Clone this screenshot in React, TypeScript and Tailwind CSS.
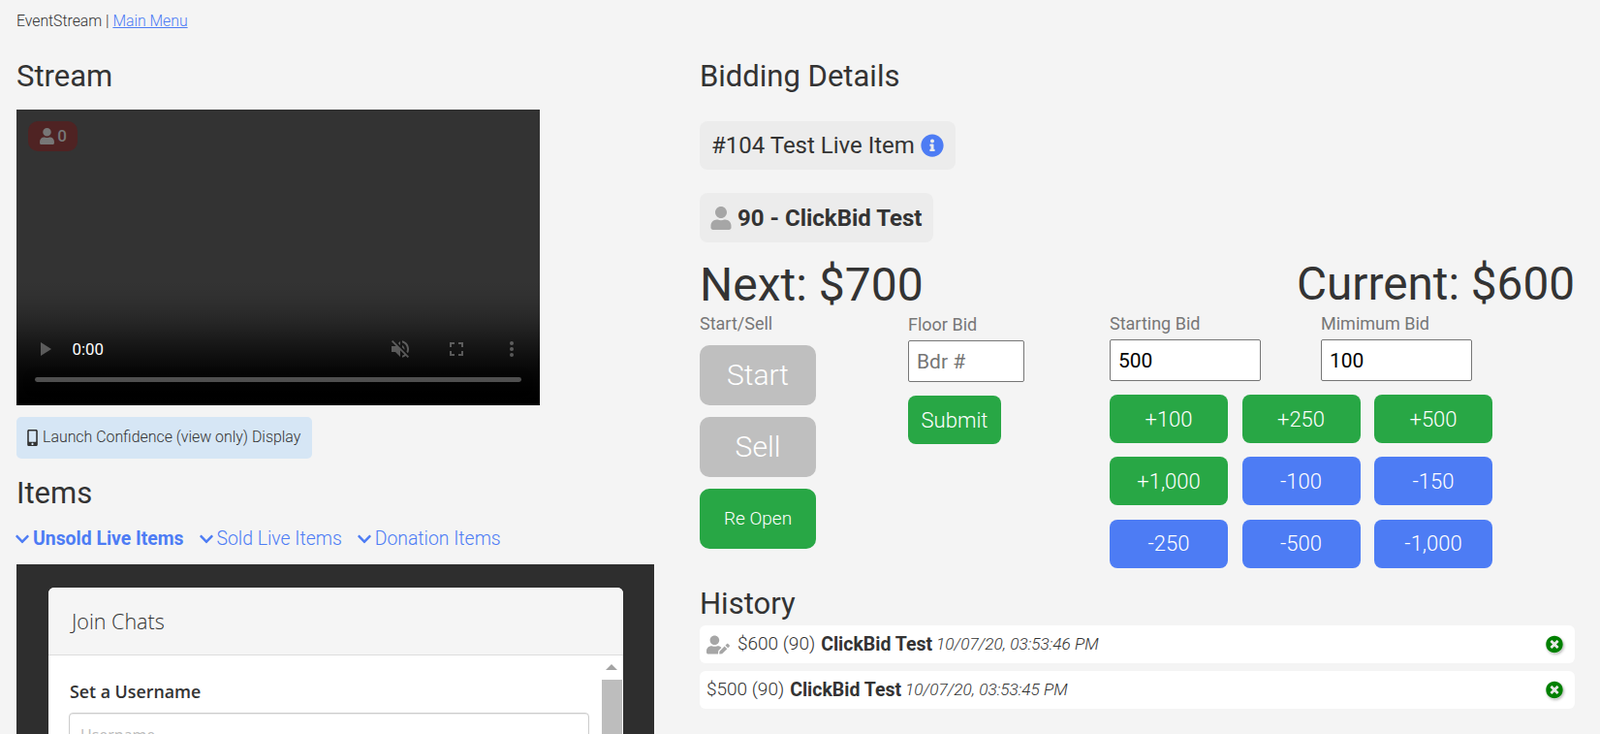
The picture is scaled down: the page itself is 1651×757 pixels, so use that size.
import { FaChevronDown, FaInfoCircle, FaMobileAlt, FaTimesCircle, FaUser, FaUserEdit } from "react-icons/fa";

const bidButtons = [
  { label: "+100", green: true },
  { label: "+250", green: true },
  { label: "+500", green: true },
  { label: "+1,000", green: true },
  { label: "-100", green: false },
  { label: "-150", green: false },
  { label: "-250", green: false },
  { label: "-500", green: false },
  { label: "-1,000", green: false },
];

const history = [
  { amount: "$600 (90)", time: "10/07/20, 03:53:46 PM", edited: true },
  { amount: "$500 (90)", time: "10/07/20, 03:53:45 PM", edited: false },
];

const tabs = [
  { label: "Unsold Live Items", bold: true },
  { label: "Sold Live Items", bold: false },
  { label: "Donation Items", bold: false },
];

function Heading({ children, className = "" }: { children: React.ReactNode; className?: string }) {
  return <h2 className={`text-[31px] leading-[34px] font-normal text-[#333] ${className}`}>{children}</h2>;
}

function JoinChats() {
  return (
    <div className="mt-[15px] h-[175px] overflow-hidden bg-[#2e2e2e] pt-[24px] pr-[32px] pl-[33px] font-['Open_Sans',sans-serif]">
      <div className="h-[200px] rounded-t-[6px] bg-white">
        <div className="flex h-[70px] items-center rounded-t-[6px] border-b border-[#ddd] bg-[#f5f5f5] px-[24px] pt-[1px] text-[21.5px] font-light text-[#333]">
          Join Chats
        </div>
        <div className="flex">
          <div className="flex-1 pt-[26px] pr-[11px] pl-[21px]">
            <div className="pl-[1px] text-[17.8px] leading-[22px] font-semibold text-[#333]">Set a Username</div>
            <div className="mt-[11px] h-[46px] rounded-[4px] border border-[#ccc] px-[11px] pt-[10px] text-[16px] text-[#bbb] shadow-[inset_0_1px_1px_rgba(0,0,0,0.075)]">
              Username
            </div>
          </div>
          <div className="flex w-[24px] flex-col items-center pt-[9px]">
            <div className="h-0 w-0 border-x-[6px] border-b-[6px] border-x-transparent border-b-[#a3a3a3]" />
            <div className="mt-[10px] h-[200px] w-[21px] bg-[#bdbdbd]" />
          </div>
        </div>
      </div>
    </div>
  );
}

export default function App() {
  return (
    <div className="h-[757px] overflow-hidden bg-[#f4f4f4] font-['Roboto',sans-serif] text-[#333]">
      <div className="px-[17px] pt-[13px] text-[15.75px] leading-[18px] font-light">
        EventStream | <a className="text-[#4d7cf4] underline">Main Menu</a>
      </div>

      <div className="flex px-[17px] pt-[31px]">
        <div className="w-[658px]">
          <Heading>Stream</Heading>
          <div className="relative mt-[17px] h-[305px] w-[540px]">
            <video controls muted className="h-[254.2px] w-[450px] bg-[#333] [zoom:1.2]" />
            <div className="absolute top-[12px] left-[12px] flex h-[31px] w-[51px] items-center justify-center gap-[2px] rounded-[10px] bg-[#4f2323] text-[17px] font-medium text-[#777]">
              <FaUser className="size-[17px]" />
              <span>0</span>
            </div>
          </div>
          <button className="mt-[12px] flex h-[43px] w-[305px] items-center gap-[2px] rounded-[5px] bg-[#d6e6f5] pb-[1px] pl-[8px] text-[15.9px] font-light text-[#333]">
            <FaMobileAlt className="size-[17px]" />
            Launch Confidence (view only) Display
          </button>
          <Heading className="mt-[19px]">Items</Heading>
          <div className="mt-[18px] -ml-[2px] flex h-[24px] items-center gap-[15px] text-[19.4px] font-light text-[#4d7cf4]">
            {tabs.map((tab) => (
              <span key={tab.label} className="flex items-center gap-[3px]">
                <FaChevronDown className="size-[16px]" />
                <span className={tab.bold ? "font-bold" : ""}>{tab.label}</span>
              </span>
            ))}
          </div>
          <div className="-mt-[1px]">
            <JoinChats />
          </div>
        </div>

        <div className="ml-[47px] w-[903px]">
          <Heading>Bidding Details</Heading>
          <div className="mt-[29px] flex h-[50px] w-[264px] items-center gap-[6px] rounded-[8px] bg-[#ececec] pl-[12px] text-[24px] font-normal">
            #104 Test Live Item
            <FaInfoCircle className="size-[24px] text-[#4d7cf4]" />
          </div>
          <div className="mt-[24px] flex h-[51px] w-[241px] items-center gap-[5px] rounded-[8px] bg-[#ececec] pl-[10px] text-[24px] font-bold">
            <FaUser className="size-[24px] text-[#a6a6a6]" />
            90 - ClickBid Test
          </div>

          <div className="mt-[16px] flex h-[56px] items-center justify-between text-[48px] font-normal text-[#333]">
            <span>Next: $700</span>
            <span className="text-[47.7px]">Current: $600</span>
          </div>

          <div className="mt-[2px] flex">
            <div className="w-[215px]">
              <div className="h-[32px] text-[18px] leading-[20px] font-normal text-[#777]">Start/Sell</div>
              <div className="flex w-[120px] flex-col gap-[12px]">
                <button className="h-[62px] rounded-[10px] bg-[#bfbfbf] pb-[2px] text-[30px] font-light text-white">Start</button>
                <button className="h-[62px] rounded-[10px] bg-[#bfbfbf] pb-[2px] text-[30px] font-light text-white">Sell</button>
                <button className="h-[62px] rounded-[10px] bg-[#28a745] text-[19px] font-light text-white">Re Open</button>
              </div>
            </div>

            <div className="w-[208px]">
              <div className="h-[27px] pt-[1px] text-[18px] leading-[20px] font-normal text-[#777]">Floor Bid</div>
              <input
                placeholder="Bdr #"
                className="block h-[43px] w-[120px] rounded-[2px] border border-[#767676] bg-white px-[8px] text-[21px] text-black placeholder:text-[#757575]"
              />
              <button className="mt-[14px] h-[50px] w-[96px] rounded-[8px] bg-[#28a745] pt-[1px] text-[22px] font-light text-white">Submit</button>
            </div>

            <div className="flex-1">
              <div className="flex gap-[62px]">
                <div>
                  <div className="h-[26px] text-[18px] leading-[20px] font-normal text-[#777]">Starting Bid</div>
                  <input
                    defaultValue="500"
                    className="block h-[43px] w-[156px] rounded-[2px] border border-[#767676] bg-white px-[8px] text-[21px] text-black"
                  />
                </div>
                <div>
                  <div className="h-[26px] text-[18px] leading-[20px] font-normal text-[#777]">Mimimum Bid</div>
                  <input
                    defaultValue="100"
                    className="block h-[43px] w-[156px] rounded-[2px] border border-[#767676] bg-white px-[8px] text-[21px] text-black"
                  />
                </div>
              </div>
              <div className="mt-[14px] grid w-[395px] grid-cols-3 gap-x-[14.5px] gap-y-[14.3px]">
                {bidButtons.map((btn) => (
                  <button
                    key={btn.label}
                    className={`h-[50px] rounded-[8px] text-[22px] font-light text-white ${btn.green ? "bg-[#28a745]" : "bg-[#4d7cf4]"}`}
                  >
                    {btn.label}
                  </button>
                ))}
              </div>
            </div>
          </div>

          <Heading className="mt-[20px]">History</Heading>
          <div className="mt-[5px] flex flex-col gap-[8px]">
            {history.map((row) => (
              <div key={row.time} className="flex h-[39px] items-center rounded-[6px] bg-white pt-[1px] pr-[12px] pl-[7px] text-[19px] font-light">
                {row.edited && <FaUserEdit className="mr-[8px] size-[24px] text-[#a6a6a6]" />}
                <span>{row.amount}</span>
                <span className="ml-[6px] text-[19.5px] font-bold">ClickBid Test</span>
                <span className="ml-[4px] text-[17.2px] italic">{row.time}</span>
                <span className="ml-auto flex size-[18px] items-center justify-center rounded-full bg-[#e8e8e8] shadow-[1px_1px_3px_rgba(0,0,0,0.3)]">
                  <FaTimesCircle className="size-[19px] text-[#008000]" />
                </span>
              </div>
            ))}
          </div>
        </div>
      </div>
    </div>
  );
}
